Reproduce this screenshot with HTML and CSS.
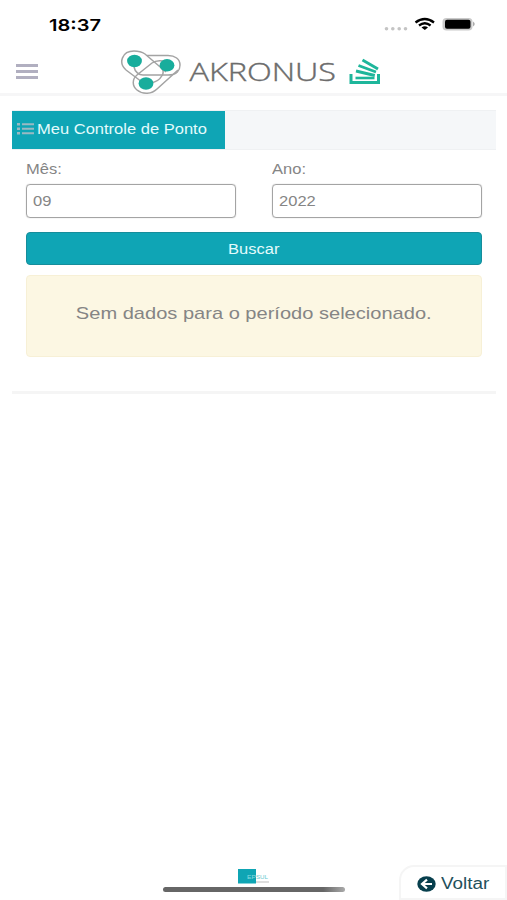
FILE: index.html
```
<!DOCTYPE html>
<html lang="pt-BR">
<head>
<meta charset="utf-8">
<title>Akronus</title>
<link rel="stylesheet" href="styles.css">
</head>
<body>
<div class="screen">
  <div class="status">
    <svg class="clock" width="54" height="20" viewBox="0 0 54 20"><text x="0" y="16.500" textLength="52" lengthAdjust="spacingAndGlyphs">18:37</text></svg>
    <svg class="indicators" width="96" height="20" viewBox="0 0 96 20">
      <g fill="#c4c4c4"><circle cx="3.500" cy="14.700" r="1.800"/><circle cx="9.800" cy="14.700" r="1.800"/><circle cx="16.200" cy="14.700" r="1.800"/><circle cx="22.500" cy="14.700" r="1.800"/></g>
      <g fill="none" stroke="#000" stroke-width="2.300"><path d="M32.500 8.500Q41.800 1.500 51 8.500"/><path d="M36 11.500Q41.800 7 47.600 11.500"/></g>
      <path d="M38.500 13.400Q41.800 11 45 13.400L41.800 16Z"/>
      <rect x="59.500" y="4" width="30" height="12.500" rx="4" fill="#c9c9c9"/>
      <rect x="62" y="5.800" width="25.500" height="9" rx="2"/>
      <path d="M90 7.500Q93.500 10 90 12.500Z" fill="#aaa"/>
    </svg>
  </div>
  <header class="header">
    <div class="menu"><i></i><i></i><i></i></div>
    <svg class="logo" width="264" height="48" viewBox="120 48 264 48">
      <g fill="none" stroke="#a3a3a3" stroke-width="1.500">
        <path d="M126 70C118 63 122 51 134 51C139 51 142 52 145 54L166 72"/>
        <path d="M126 70L142 82M134 67C135 72 139 75 143 75H168C177 75 180 70 180 65C180 59 175 55.500 168 55.500H147"/>
        <path d="M178 70L157 89C152 94 143 95 137 90C132 86 132 79 137 75L152 63C156 60 161 60 167 62"/>
        <path d="M162 68C164 72 163 75 161 77C159 81 155 82 151 83"/>
      </g>
      <g fill="#18ad9c"><ellipse cx="134.500" cy="61" rx="7.400" ry="6.200"/><ellipse cx="167" cy="65.300" rx="7.400" ry="6.200"/><ellipse cx="146" cy="83.500" rx="7.400" ry="6.200"/></g>
      <text class="wordmark" x="189.500" y="81.300" textLength="146.500" lengthAdjust="spacingAndGlyphs">AKRONUS</text>
      <g fill="none" stroke="#1eb69b" stroke-width="3">
        <path d="M351 74V82.500H378.500V74"/>
        <path d="M355.500 78H374.500" stroke-width="2.600"/>
        <path d="M356 71L374.800 75.500M358.500 65.500L376 72M362.500 60L378 69" stroke-width="2.900"/>
      </g>
    </svg>
  </header>
  <main class="panel">
    <div class="tabs">
      <div class="tab">
        <svg width="17" height="12" viewBox="0 0 17 12" fill="#9bb9c2"><path d="M0 0h3v2.500H0zM5 .3h12v1.900H5zM0 4.500h3V7H0zM5 4.800h12v1.900H5zM0 9h3v2.500H0zM5 9.300h12v1.900H5z"/></svg>
        <span class="wide">Meu Controle de Ponto</span>
      </div>
    </div>
    <form class="form">
      <div class="fields">
        <label class="field"><span class="wide">Mês:</span><span class="input"><span class="wide">09</span></span></label>
        <label class="field"><span class="wide">Ano:</span><span class="input"><span class="wide">2022</span></span></label>
      </div>
      <div class="button"><span class="wide center">Buscar</span></div>
      <div class="notice"><span class="wide center">Sem dados para o período selecionado.</span></div>
    </form>
  </main>
  <footer class="footer">
    <div class="brand">
      <svg width="34" height="16" viewBox="0 0 34 16">
        <rect x="0" y="0" width="18" height="14.500" fill="#0fa5b4"/>
        <path d="M18 12h13v2H18z" fill="#dedede"/>
        <text x="9" y="10" fill="#8adce1" textLength="9" lengthAdjust="spacingAndGlyphs">EP</text>
        <text x="18" y="10" fill="#69c9d0" textLength="12" lengthAdjust="spacingAndGlyphs">SUL</text>
      </svg>
      <div class="home"></div>
    </div>
    <div class="back">
      <svg width="19" height="16" viewBox="0 0 19 16"><ellipse cx="9.500" cy="8" rx="9.200" ry="7.700" fill="#073f4d"/><path d="M15 8H5M10 3.700L5 8L10 12.300" fill="none" stroke="#fff" stroke-width="2.200"/></svg>
      <span class="wide">Voltar</span>
    </div>
  </footer>
</div>
</body>
</html>
```
FILE: styles.css
```
* { box-sizing: border-box; }
body { margin: 0; background: #fff; font: 14px/18px "Liberation Sans", Arial, sans-serif; color: #858585; }
svg { display: block; flex: none; }
.screen { height: 900px; display: flex; flex-direction: column; overflow: hidden; }
.wide { display: inline-block; white-space: nowrap; transform: scaleX(1.18); transform-origin: left center; }
.wide.center { transform-origin: center; }
.status { height: 48px; padding: 14px 25px 0 49px; display: flex; justify-content: space-between; }
.clock { font: 600 16.500px Inter, sans-serif; fill: #000; }
.indicators { margin-right: 3px; }
.header { height: 48px; display: flex; padding-left: 16px; border-bottom: 3px solid #f6f6f7; }
.menu { width: 22px; padding-top: 16px; display: flex; flex-direction: column; gap: 3px; }
.menu i { height: 3px; background: #b1afc0; }
.logo { margin-left: 82px; }
.wordmark { font: 300 26.500px "Open Sans", sans-serif; fill: #6c6c6c; stroke: #6c6c6c; stroke-width: .4px; }
.panel { margin: 14px 11px 0 12px; height: 284px; border-bottom: 3px solid #f5f5f5; }
.tabs { height: 40px; background: #f5f7f9; border-top: 1px solid #eff1f3; border-bottom: 1px solid #eff1f3; }
.tab { width: 213px; height: 38px; padding: 0 0 2px 5px; display: flex; align-items: center; gap: 3px; background: #0fa5b5; color: #e4fbfc; }
.form { padding: 10px 14px 0; }
.fields { display: grid; grid-template-columns: 210px 210px; justify-content: space-between; }
.field { display: flex; flex-direction: column; align-items: flex-start; gap: 6px; }
.input { width: 100%; height: 34px; padding: 7px 6px; border: 1px solid #a4a4a4; border-radius: 4px; display: block; box-shadow: 0 0 1px #aaa; }
.button { height: 33px; margin-top: 14px; display: flex; align-items: center; justify-content: center; background: #0fa5b5; border: 1px solid #168d9b; border-radius: 4px; color: #e4fbfc; }
.notice { height: 82px; margin-top: 10px; padding-bottom: 4px; display: flex; align-items: center; justify-content: center; background: #fcf7e3; border: 1px solid #f7f0d6; border-radius: 4px; font-size: 17px; }
.footer { margin-top: auto; height: 35px; display: flex; justify-content: space-between; padding-left: 163px; }
.brand { width: 182px; padding: 4px 0 0; }
.brand svg { margin-left: 75px; font: 6px "Liberation Sans", sans-serif; }
.home { height: 5px; margin-top: 2px; border-radius: 3px; background: linear-gradient(to right, #666 88%, #aaa); }
.back { width: 108px; height: 35px; padding: 2px 0 0 16px; display: flex; align-items: center; gap: 5px; border: 2px solid #f5f5f5; border-radius: 15px 0 0 0; color: #23505b; font-size: 16px; }
```
